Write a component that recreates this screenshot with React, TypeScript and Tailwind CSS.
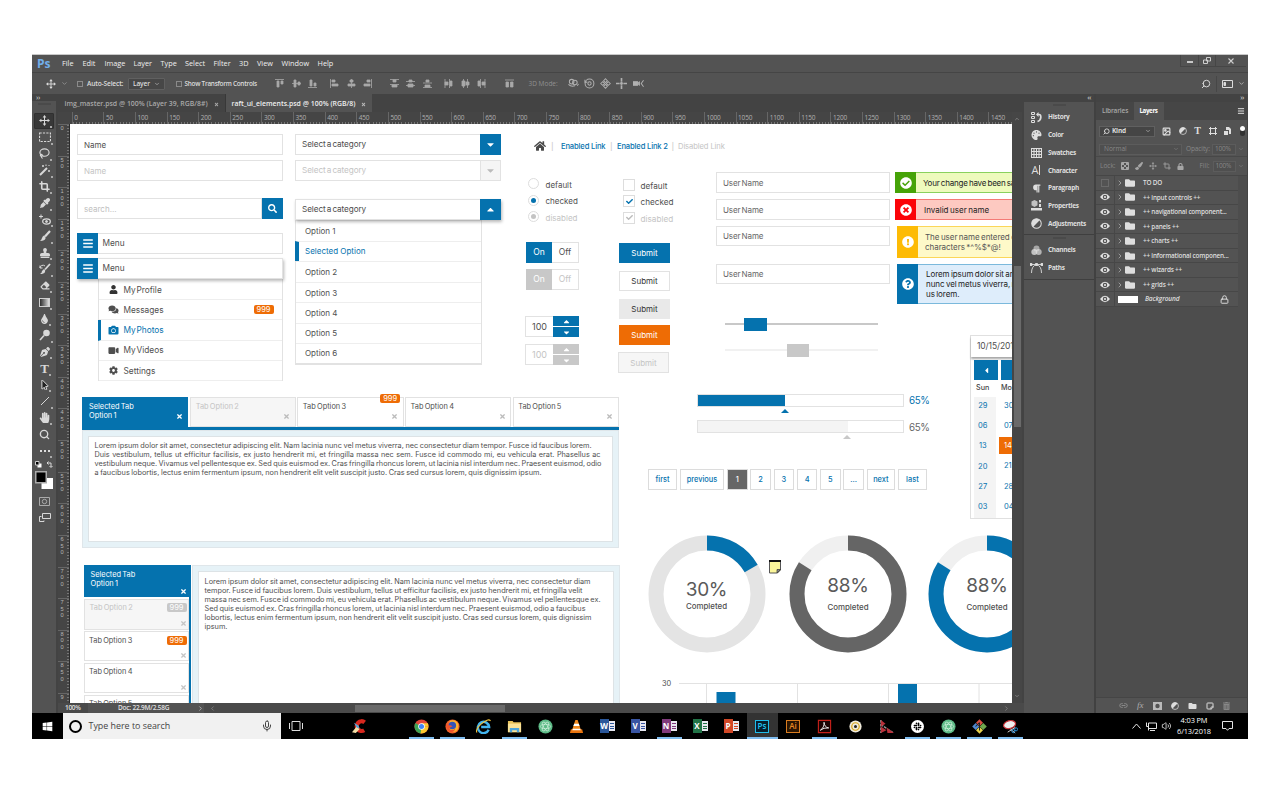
import React from "react";
import {
  FaHome, FaUser, FaComments, FaCamera, FaVideo, FaCog, FaSearch, FaBars, FaTimes, FaCheck,
  FaCheckCircle, FaTimesCircle, FaExclamationCircle, FaQuestionCircle, FaCaretUp, FaCaretDown, FaCaretLeft,
  FaHandPaper, FaEyeDropper, FaPaintBrush, FaEraser, FaTint, FaPenNib, FaStamp, FaFolder, FaWindows,
  FaLock, FaParagraph, FaPalette, FaTrashAlt, FaMousePointer, FaSlack,
} from "react-icons/fa";
import {
  ChevronDown, ChevronUp, ChevronRight, ChevronLeft, Search, Lasso, Crop,
  Image as ImageIcon, Mic, Volume2, Lock, StickyNote, Link2, Menu,
} from "lucide-react";

const UI = "font-['Open_Sans','Noto_Sans',sans-serif]";
const DOC = "font-['Inter','Liberation_Sans',sans-serif]";

/* ---------- small drawings ---------- */

function MoveIcon({ className }: { className: string }) {
  return (
    <svg className={className} viewBox="0 0 12 12" fill="currentColor" stroke="currentColor">
      <path d="M6 2v8M2 6h8" strokeWidth="1.100" />
      <path d="M6 0l2 2.600H4zM6 12l2-2.600H4zM0 6l2.600-2v4zM12 6L9.400 4v4z" stroke="none" />
    </svg>
  );
}

function HalfDisc({ className }: { className: string }) {
  return (
    <svg className={className} viewBox="0 0 12 12">
      <circle cx="6" cy="6" r="5.200" fill="none" stroke="currentColor" strokeWidth="1.100" />
      <path d="M9.700 2.300A5.200 5.200 0 0 0 2.300 9.700z" fill="currentColor" />
    </svg>
  );
}

function EyeIcon() {
  return (
    <svg className="h-[8px] w-[10px]" viewBox="0 0 12 9">
      <path d="M0 4.500Q6-3.500 12 4.500 6 12.500 0 4.500z" fill="#e4e4e4" /><circle cx="6" cy="4.500" r="2.700" fill="#535353" /><circle cx="6" cy="4.500" r="1.300" fill="#e4e4e4" />
    </svg>
  );
}

/* ---------- application chrome ---------- */

const menus: [string, string][] = [
  ["File", "w-[20.5px]"], ["Edit", "w-[22px]"], ["Image", "w-[29px]"], ["Layer", "w-[27px]"], ["Type", "w-[24.5px]"],
  ["Select", "w-[28.5px]"], ["Filter", "w-[25.5px]"], ["3D", "w-[18px]"], ["View", "w-[24.5px]"], ["Window", "w-[36px]"], ["Help", "w-[20px]"],
];

function MenuBar() {
  return (
    <div className="flex h-[18px] items-center border-b border-[#454545] bg-[#535353] text-[7.3px] text-[#f0f0f0]">
      <div className="w-[30px] pl-[5px] text-[12px] font-bold leading-none text-[#71aeea]">Ps</div>
      {menus.map(([m, w]) => <div key={m} className={`${w} whitespace-nowrap`}>{m}</div>)}
      <div className="mr-[2px] ml-auto flex h-[12px] items-center self-start border-b border-l border-[#464646] text-[#cfcfcf]">
        <div className="flex h-full w-[18px] items-end justify-center border-r border-[#464646] pb-[3px]"><div className="h-[2px] w-[6px] bg-[#c8c8c8]" /></div>
        <div className="flex h-full w-[17px] items-center justify-center border-r border-[#464646]">
          <svg className="h-[7px] w-[8px]" viewBox="0 0 8 7" fill="none" stroke="currentColor"><path d="M3.500.5h4v3.500h-4zM.5 3h4v3.500h-4z" /></svg>
        </div>
        <div className="flex h-full w-[30px] items-center justify-center">
          <svg className="h-[6px] w-[6px]" viewBox="0 0 6 6" stroke="currentColor" strokeWidth="1.100"><path d="M.5.5l5 5M5.500.5l-5 5" /></svg>
        </div>
      </div>
    </div>
  );
}

const alignPaths: [string, string][] = [
  ["M0 .5h9M2 2h2v6h-2zM6 2h2v3h-2z", "w-[16.5px]"],
  ["M0 4.500h9M2 1h2v7h-2zM6 3h2v3h-2z", "w-[16.5px]"],
  ["M0 8.500h9M2 1h2v6h-2zM6 4h2v3h-2z", "w-[22px]"],
  ["M.5 0v9M2 1h3v2h-3zM2 5h6v2h-6z", "w-[16.5px]"],
  ["M4.500 0v9M3 1h3v2h-3zM1 5h7v2h-7z", "w-[16.5px]"],
  ["M8.500 0v9M4 1h3v2h-3zM1 5h6v2h-6z", "w-[26.5px]"],
  ["M0 .5h9M0 5.500h9M3 1h3v2h-3zM2 6h5v2h-5z", "w-[16.5px]"],
  ["M0 2.500h9M0 6.500h9M3 1h3v2h-3zM2 5h5v3h-5z", "w-[16.5px]"],
  ["M0 4h9M0 8.500h9M3 1h3v2h-3zM2 6h5v2h-5z", "w-[21.5px]"],
  ["M1 0v9M5.500 0v9M1 3h3v3h-3zM6 2h2v5h-2z", "w-[16.5px]"],
  ["M2.500 0v9M6.500 0v9M1 2h3v5h-3zM5 3h3v3h-3z", "w-[16.5px]"],
  ["M3.500 0v9M8 0v9M1 2h2v5h-2zM5 3h3v3h-3z", "w-[27.5px]"],
  ["M0 1h9M1 3h2.500v5h-2.500zM5.500 3h2.500v5h-2.500z", "w-[26px]"],
];

const modeIcons = [
  <><circle cx="4" cy="4" r="2.500" /><circle cx="7.500" cy="5" r="2.500" /><path d="M.5 7q3 3 7 1.500M10 8.500l1.500-2" /></>,
  <><circle cx="6" cy="6" r="4.800" /><circle cx="6" cy="6" r="1.800" /><path d="M1 2v2.500h2.500" /></>,
  <><path d="M6 .8L8 3 6 5 4 3zM6 7l2 2-2 2.200L4 9zM.8 6L3 4l2 2-2 2zM11.200 6L9 4 7 6l2 2z" /></>,
  <><path d="M6 0v4M6 8v4M0 6h4M8 6h4" strokeWidth="1.800" /><circle cx="6" cy="6" r="1" fill="currentColor" /></>,
  <><path d="M0 4h5v4H0z" fill="currentColor" /><path d="M5 6l2-1.500v3zM11.500 2.500L9 6l2.500 3.500" fill="none" /></>,
];

function OptionsBar() {
  return (
    <div className="flex h-[21px] items-center bg-[#535353] text-[6.600px] font-semibold text-[#dcdcdc]">
      <div className="flex w-[43px] shrink-0 items-center pl-[14px]"><MoveIcon className="mr-[5px] h-[10px] w-[10px]" /><ChevronDown className="h-[7px] w-[7px] text-[#b0b0b0]" /></div>
      <div className="mr-[4px] ml-[2px] h-[6px] w-[6px] shrink-0 border border-[#8a8a8a]" />
      <div className="w-[41px] whitespace-nowrap tracking-[-0.150px]">Auto-Select:</div>
      <div className="flex h-[12px] w-[37px] items-center justify-between rounded-[1px] border border-[#606060] bg-[#474747] px-[4px] tracking-[-0.150px]">Layer<ChevronDown className="h-[6px] w-[6px]" /></div>
      <div className="mr-[3px] ml-[10.500px] h-[6px] w-[6px] shrink-0 border border-[#8a8a8a]" />
      <div className="w-[90.500px] text-[6.400px] whitespace-nowrap tracking-[-0.260px]">Show Transform Controls</div>
      <div className="flex shrink-0 items-center text-[#a8a8a8]">
        {alignPaths.map(([d, w], i) => (
          <div key={i} className={`${w} flex items-center`}>
            <svg className="h-[9px] w-[9px]" viewBox="0 0 9 9" fill="currentColor" stroke="currentColor" strokeWidth=".8"><path d={d} /></svg>
          </div>
        ))}
      </div>
      <div className="-ml-[2px] w-[39px] shrink-0 text-[6.500px] whitespace-nowrap font-normal text-[#909090]">3D Mode:</div>
      <div className="flex shrink-0 items-center gap-[5.300px] text-[#b0b0b0]">
        {modeIcons.map((m, i) => <svg key={i} className="h-[11px] w-[11px]" viewBox="0 0 12 12" fill="none" stroke="currentColor" strokeWidth="1.100">{m}</svg>)}
      </div>
      <div className="ml-auto flex items-center pr-[3px]">
        <Search className="h-[10px] w-[10px] -scale-x-100" strokeWidth={2.300} />
        <div className="mr-[5px] ml-[5px] h-[16px] w-px bg-[#474747]" />
        <svg className="mr-[5px] h-[8px] w-[11px]" viewBox="0 0 11 8" fill="none" stroke="currentColor"><path d="M.5.5h10v7h-10z" /><path d="M2 2.500h1.500v3h-1.500z" fill="currentColor" /></svg>
        <ChevronDown className="h-[7px] w-[7px]" />
      </div>
    </div>
  );
}

const svgTool = (children: React.ReactNode) => <svg className="h-[12px] w-[12px]" viewBox="0 0 12 12" fill="none" stroke="currentColor" strokeWidth="1">{children}</svg>;

const tools: React.ReactNode[] = [
  <MoveIcon className="h-[11px] w-[11px]" />,
  svgTool(<path d="M.5 2h11v8.500H.5z" strokeDasharray="2.200 1.200" strokeWidth="1.200" />),
  <Lasso className="h-[11px] w-[11px]" strokeWidth={2.500} />,
  svgTool(<><path d="M8 4L1 11" strokeWidth="2" /><path d="M4 1v2M3 2h2M10 6v2M9 7h2M10.500 1l-1 1M7 .5v1.500" /></>),
  <Crop className="h-[11px] w-[11px]" strokeWidth={3.500} />,
  <FaEyeDropper className="h-[10px] w-[10px]" />,
  svgTool(<><path d="M0 2.500h4M2 .5v4" /><ellipse cx="7.500" cy="7.500" rx="3.800" ry="2.600" strokeWidth="1.300" /><circle cx="7.500" cy="7.500" r="1" fill="currentColor" /></>),
  svgTool(<><path d="M11 1L6 6.500" strokeWidth="2.200" /><path d="M5 5.500q2 1 1.500 3t-5.500 2.500q1.500-1 2-3t2-2.500z" fill="currentColor" stroke="none" /></>),
  <FaStamp className="h-[10px] w-[10px]" />,
  svgTool(<><path d="M11 1L6 6.500" strokeWidth="1.800" /><path d="M5 6q2 1 1 3t-5 2q2-1 2-3z" fill="currentColor" stroke="none" /><path d="M1 5a3 3 0 0 1 5-2M1 2.500V5h2.500" /></>),
  <FaEraser className="h-[9px] w-[10px]" />,
  <div className="h-[9px] w-[11px] border border-[#cfcfcf] bg-gradient-to-r from-[#2f2f2f] to-[#e0e0e0]" />,
  <FaTint className="h-[10px] w-[9px]" />,
  svgTool(<><circle cx="7.500" cy="4" r="3.300" fill="currentColor" stroke="none" /><path d="M5 6.500L1 11" strokeWidth="1.600" /></>),
  <FaPenNib className="h-[10px] w-[10px]" />,
  <span className="font-['Liberation_Serif',serif] text-[13px] font-bold leading-none">T</span>,
  <FaMousePointer className="h-[10px] w-[8px] text-[#222] [stroke:#e0e0e0] [stroke-width:50px]" />,
  svgTool(<path d="M2 10L10 2" />),
  <FaHandPaper className="h-[11px] w-[11px]" />,
  <Search className="h-[11px] w-[11px]" strokeWidth={3} />,
  <div className="flex gap-[2px]"><i className="h-[2px] w-[2px] bg-[#ddd]" /><i className="h-[2px] w-[2px] bg-[#ddd]" /><i className="h-[2px] w-[2px] bg-[#ddd]" /></div>,
];

function Toolbar() {
  return (
    <div className="flex w-[26px] shrink-0 flex-col border-r-2 border-[#434343] bg-[#535353] text-[#d8d8d8]">
      <div className="h-[7px] bg-[#434343] pl-[4px] text-[8px] leading-[6px] tracking-[-0.500px]">››</div>
      <div className="mx-auto mt-[2px] mb-[7.500px] h-[2px] w-[13px] bg-[#4a4a4a]" />
      {tools.map((t, i) => (
        <div key={i} className={`mx-[2px] flex h-[16.500px] shrink-0 items-center justify-center border ${i === 0 ? "rounded-[1px] border-[#303030] bg-[#383838]" : "border-transparent"}`}>
          {t}
          {i !== 19 && <i className="-mr-[3px] h-[2px] w-[2px] self-end bg-[#aaa]" />}
        </div>
      ))}
      <div className="mt-[2px] flex justify-between px-[3px]">
        <svg className="h-[7px] w-[7px]" viewBox="0 0 7 7"><path d="M2.500 2.500h4v4h-4z" fill="#fff" /><path d="M.5.5h3.500v3.500h-3.500z" fill="#000" stroke="#ccc" /></svg>
        <svg className="h-[7px] w-[7px]" viewBox="0 0 7 7" fill="none" stroke="currentColor"><path d="M2.500.5L1 2l1.500 1.500M1 2h4v4M3.500 5L5 6.500 6.500 5" /></svg>
      </div>
      <svg className="mt-[3px] ml-[3px] h-[20px] w-[19px]" viewBox="0 0 19 20"><path d="M6.500 7h11.500v11h-11.500z" fill="#fff" /><path d="M.75.75h10.500v11h-10.500z" fill="#000" stroke="#aaa" strokeWidth="1.500" /></svg>
      <svg className="mt-[6px] ml-[7px] h-[9px] w-[11px]" viewBox="0 0 11 9" fill="none" stroke="#aaa"><path d="M.5.5h10v8h-10z" /><circle cx="5.500" cy="4.500" r="2.200" /></svg>
      <svg className="mt-[7px] ml-[7px] h-[10px] w-[12px]" viewBox="0 0 12 10" fill="none" stroke="currentColor"><path d="M3.500.5h8v5h-8zM5 7.500v1h-4.500v-5h2" /></svg>
    </div>
  );
}

function HRuler() {
  return (
    <div className="flex h-[12px] shrink-0 overflow-hidden bg-[#454545] text-[6.500px] leading-[12px] text-[#b0b0b0]">
      <div className="w-[13.800px] shrink-0" />
      {Array.from({ length: 30 }, (_, i) => (
        <div key={i} className="h-full w-[31.620px] shrink-0 border-l border-[#666] bg-[repeating-linear-gradient(90deg,#777_0_1px,transparent_1px_3.16px)] bg-[length:100%_2px] bg-bottom bg-no-repeat pl-[1.500px] tracking-[-0.200px]">{i * 50}</div>
      ))}
    </div>
  );
}

function VRuler() {
  return (
    <div className="flex w-[12px] shrink-0 flex-col overflow-hidden border-r border-[#2c2c2c] bg-[#454545] font-['Liberation_Sans',sans-serif] text-[5.700px] leading-[6.600px] text-[#b5b5b5]">
      {Array.from({ length: 19 }, (_, i) => (
        <div key={i} className="flex h-[31.620px] w-full shrink-0 flex-col border-t border-[#666] bg-[repeating-linear-gradient(180deg,#777_0_1px,transparent_1px_3.16px)] bg-[length:2px_100%] bg-right bg-no-repeat pl-[2.500px]">
          {(i === 18 ? "9" : String(i * 50)).split("").map((c, k) => <span key={k}>{c}</span>)}
        </div>
      ))}
    </div>
  );
}

/* ---------- document content ---------- */

function Field({ text, className = "" }: { text: string; className?: string }) {
  return <div className={`flex shrink-0 items-center border border-[#e2e2e2] bg-white pl-[6px] text-[8px] ${className}`}>{text}</div>;
}

function Select({ up = false, disabled = false, className = "" }: { up?: boolean; disabled?: boolean; className?: string }) {
  return (
    <div className={`flex w-[206px] shrink-0 border border-[#e2e2e2] bg-white text-[8.200px] [word-spacing:-1px] ${disabled ? "text-[#c4c4c4]" : "text-[#4c4c4c]"} ${className}`}>
      <div className="flex flex-1 items-center pl-[6px] tracking-[-0.100px]">Select a category</div>
      <div className={`-my-px -mr-px flex w-[21px] items-center justify-center ${disabled ? "border border-[#e2e2e2] bg-[#f5f5f5] text-[#bbb]" : "bg-[#0572ae] text-white"}`}>
        {up ? <FaCaretUp className="h-[11px] w-[11px]" /> : <FaCaretDown className="h-[11px] w-[11px]" />}
      </div>
    </div>
  );
}

function MenuHead({ open = false, className = "" }: { open?: boolean; className?: string }) {
  return (
    <div className={`flex h-[21px] w-[206px] shrink-0 border border-[#e2e2e2] bg-white ${open ? "relative shadow-[1px_2px_3px_rgba(0,0,0,0.28)]" : ""} ${className}`}>
      <div className="-my-px -ml-px flex w-[21px] items-center justify-center bg-[#0572ae] text-white"><FaBars className="h-[11px] w-[10px]" /></div>
      <div className="flex items-center pl-[4.500px] text-[8.300px]">Menu</div>
    </div>
  );
}

const menuRows: [React.ReactNode, string][] = [
  [<FaUser className="h-[9px] w-[9px] text-[#333]" />, "My Profile"],
  [<FaComments className="h-[9px] w-[11px]" />, "Messages"],
  [<FaCamera className="h-[10px] w-[11px]" />, "My Photos"],
  [<FaVideo className="h-[9px] w-[11px]" />, "My Videos"],
  [<FaCog className="h-[9px] w-[9px]" />, "Settings"],
];

function ColumnA() {
  return (
    <div className="flex w-[213px] shrink-0 flex-col pt-[10px] pl-[7px]">
      <Field text="Name" className="h-[21px]" />
      <Field text="Name" className="mt-[5px] h-[21px] text-[#c4c4c4]" />
      <div className="mt-[17px] flex h-[21px] shrink-0">
        <Field text="search..." className="flex-1 text-[#c0c0c0]" />
        <div className="flex w-[21px] items-center justify-center bg-[#0572ae] text-white"><FaSearch className="h-[9px] w-[9px]" /></div>
      </div>
      <MenuHead className="mt-[14px]" />
      <MenuHead open className="mt-[4px]" />
      <div className="ml-[21px] flex flex-col border-r border-l border-[#e2e2e2] pt-[1px]">
        {menuRows.map(([icon, label], i) => (
          <div key={label} className={`flex h-[20.200px] items-center border-b border-[#eee] ${i === 2 ? "-ml-px border-l-[3px] border-l-[#0572ae] pl-[6px] text-[#0572ae]" : "pl-[8px]"}`}>
            <div className="flex w-[13px] justify-center">{icon}</div>
            <div className="pt-[1px] pl-[3.500px] text-[8.300px] [word-spacing:-1.500px]">{label}</div>
            {i === 1 && <div className="mr-[8.500px] ml-auto rounded-[2px] bg-[#ee6c05] px-[3px] text-[7.500px] leading-[9px] text-white">999</div>}
          </div>
        ))}
      </div>
    </div>
  );
}

const optionRows: [string, string][] = [
  ["Option 1", "h-[20.500px]"], ["Selected Option", "h-[20px]"], ["Option 2", "h-[21.300px]"], ["Option 3", "h-[20.500px]"],
  ["Option 4", "h-[20.300px]"], ["Option 5", "h-[20px]"], ["Option 6", "h-[20px]"],
];

function ColumnB() {
  return (
    <div className="ml-[12px] flex w-[206px] shrink-0 flex-col pt-[10px]">
      <Select className="h-[21px]" />
      <Select disabled className="mt-[5px] h-[21px]" />
      <Select up className="relative mt-[18px] h-[21px] shadow-[1px_2px_3px_rgba(0,0,0,0.28)]" />
      <div className="w-[187px] border-x border-b-2 border-[#e2e2e2] text-[8px]">
        {optionRows.map(([o, h], i) => (
          <div key={o} className={`${h} flex items-center border-t border-[#eee] ${i === 1 ? "-ml-px border-l-[4px] border-l-[#0572ae] pl-[6px] text-[#0572ae]" : "pl-[9px]"}`}>{o}</div>
        ))}
      </div>
    </div>
  );
}

function Radio({ label, state }: { label: string; state: number }) {
  return (
    <div className={`flex h-[16.500px] items-center ${state === 2 ? "text-[#c4c4c4]" : ""}`}>
      <div className="flex h-[11px] w-[11px] items-center justify-center rounded-full border border-[#ddd]">
        {state > 0 && <div className={`h-[5px] w-[5px] rounded-full ${state === 1 ? "bg-[#0572ae]" : "bg-[#c4c4c4]"}`} />}
      </div>
      <div className="pt-[2px] pl-[6.500px] text-[8px]">{label}</div>
    </div>
  );
}

function Check({ label, state }: { label: string; state: number }) {
  return (
    <div className={`flex h-[16.500px] items-center ${state === 2 ? "text-[#c4c4c4]" : ""}`}>
      <div className="flex h-[12px] w-[12px] items-center justify-center border border-[#ddd]">
        {state > 0 && <FaCheck className={`h-[7px] w-[7px] ${state === 1 ? "text-[#0572ae]" : "text-[#bbb]"}`} />}
      </div>
      <div className="pt-[2px] pl-[5.500px] text-[8.200px]">{label}</div>
    </div>
  );
}

function Toggle({ disabled = false, className = "" }: { disabled?: boolean; className?: string }) {
  return (
    <div className={`ml-[1px] flex h-[21px] w-[53px] text-[8.500px] ${className}`}>
      <div className={`flex w-[26px] items-center justify-center text-white ${disabled ? "bg-[#c8c8c8]" : "bg-[#0572ae]"}`}>On</div>
      <div className={`flex flex-1 items-center justify-center border border-l-0 border-[#e2e2e2] ${disabled ? "text-[#c4c4c4]" : ""}`}>Off</div>
    </div>
  );
}

function Spinner({ disabled = false, className = "" }: { disabled?: boolean; className?: string }) {
  const bg = disabled ? "bg-[#c8c8c8]" : "bg-[#0572ae]";
  return (
    <div className={`flex h-[21px] w-[54px] text-[9px] ${className}`}>
      <div className={`flex flex-1 items-center justify-center border border-r-0 border-[#e2e2e2] ${disabled ? "text-[#c4c4c4]" : ""}`}>100</div>
      <div className="flex w-[26px] flex-col gap-px text-white">
        <div className={`flex flex-1 items-center justify-center ${bg}`}><FaCaretUp className="h-[9px] w-[9px]" /></div>
        <div className={`flex flex-1 items-center justify-center ${bg}`}><FaCaretDown className="h-[9px] w-[9px]" /></div>
      </div>
    </div>
  );
}

const btn = "flex shrink-0 w-[51px] items-center justify-center text-[8px]";

function ColumnC() {
  return (
    <div className="ml-[24px] flex w-[191px] shrink-0 flex-col">
      <div className="flex h-[51.500px] shrink-0 items-start pt-[16px] pl-[9px] text-[7.600px] leading-[13px] font-medium whitespace-nowrap text-[#0572ae]">
        <FaHome className="h-[12px] w-[12px] shrink-0 text-[#4a4a4a]" />
        <span className="w-[15px] shrink-0 pl-[5px] text-[#ccc]">|</span>
        <span className="w-[49px] shrink-0 tracking-[-0.150px]">Enabled Link</span>
        <span className="w-[7px] shrink-0 text-[#ccc]">|</span>
        <span className="w-[54.500px] shrink-0 tracking-[-0.150px]">Enabled Link 2</span>
        <span className="w-[6.500px] shrink-0 text-[#ccc]">|</span>
        <span className="font-normal tracking-[-0.100px] text-[#c4c4c4]">Disabled Link</span>
      </div>
      <div className="flex">
        <div className="w-[93px]">
          <div className="pl-[3px]">
            <Radio label="default" state={0} /><Radio label="checked" state={1} /><Radio label="disabled" state={2} />
          </div>
          <Toggle className="mt-[17px]" />
          <Toggle disabled className="mt-[6px]" />
          <Spinner className="mt-[26px]" />
          <Spinner disabled className="mt-[7px]" />
        </div>
        <div className="flex flex-col pt-[1px]">
          <div className="pl-[5px]">
            <Check label="default" state={0} /><Check label="checked" state={1} /><Check label="disabled" state={2} />
          </div>
          <div className={`${btn} mt-[17px] ml-[1px] h-[20px] bg-[#0572ae] text-white`}>Submit</div>
          <div className={`${btn} mt-[8px] ml-[1px] h-[20px] border border-[#e2e2e2] text-[#333]`}>Submit</div>
          <div className={`${btn} mt-[8px] ml-[1px] h-[20px] bg-[#e9e9e9] text-[#333]`}>Submit</div>
          <div className={`${btn} mt-[6px] ml-[1px] h-[20px] bg-[#ee6c05] text-white`}>Submit</div>
          <div className={`${btn} mt-[7px] h-[21px] border border-[#e2e2e2] bg-[#f6f6f6] text-[#c4c4c4]`}>Submit</div>
        </div>
      </div>
    </div>
  );
}

function Alert({ icon, head, body, lines, className }: { icon: React.ReactNode; head: string; body: string; lines: string[]; className: string }) {
  return (
    <div className={`flex flex-1 overflow-hidden ${className}`}>
      <div className={`flex w-[21px] shrink-0 items-center justify-center text-white ${head}`}>{icon}</div>
      <div className={`flex flex-1 flex-col justify-center overflow-hidden border-y text-[8px] leading-[10px] whitespace-nowrap [word-spacing:-0.700px] ${body}`}>
        {lines.map((l) => <div key={l}>{l}</div>)}
      </div>
    </div>
  );
}

function Slider({ left, thumb, track, className }: { left: string; thumb: string; track: string; className: string }) {
  return (
    <div className={`ml-[9px] flex h-[13px] w-[153px] items-center ${className}`}>
      <div className={`${left} h-[2px] ${track}`} /><div className={`h-[13px] w-[22.500px] ${thumb}`} /><div className={`h-[2px] flex-1 ${track}`} />
    </div>
  );
}

const calendar: [string, string][] = [["29", "30"], ["06", "07"], ["13", "14"], ["20", "21"], ["27", "28"], ["03", "04"]];

function Calendar() {
  return (
    <div className="flex h-[184px] w-[80px] shrink-0 flex-col border border-[#e0e0e0] bg-white">
      <div className="flex h-[21px] shrink-0 items-center pl-[6px] text-[8.500px] tracking-[-0.100px] shadow-[0_2px_2px_rgba(0,0,0,0.35)]">10/15/2018</div>
      <div className="mt-[3px] ml-[3px] flex h-[20px] shrink-0 gap-[3px] text-white">
        <div className="flex w-[24px] items-center justify-center bg-[#0572ae]"><FaCaretLeft className="h-[9px] w-[9px]" /></div>
        <div className="w-[40px] bg-[#0572ae]" />
      </div>
      <div className="flex h-[17px] shrink-0 items-center pl-[5px] text-[7.200px] font-medium text-[#444]"><span className="w-[25px]">Sun</span><span>Mon</span></div>
      <div className="ml-[3px] flex text-[7.500px] text-[#0572ae]">
        <div className="w-[21.500px] bg-[#f4f4f4]">{calendar.map(([a]) => <div key={a} className="flex h-[20.200px] items-center justify-center pr-[4px] pb-[3px]">{a}</div>)}</div>
        <div className="ml-[3.500px] w-[22px]">
          {calendar.map(([, b]) => (
            <div key={b} className="h-[20.200px]"><div className={`flex h-[17px] items-center pl-[5px] ${b === "14" ? "bg-[#ee6c05] text-white" : ""}`}>{b}</div></div>
          ))}
        </div>
      </div>
    </div>
  );
}

function ColumnD() {
  const input = "w-[174px] text-[7.900px] text-[#666] tracking-[-0.100px] [word-spacing:-1px]";
  const ic = "h-[12px] w-[12px]";
  return (
    <div className="flex w-[296px] shrink-0 flex-col pt-[48px]">
      <div className="flex h-[21px] items-start"><Field text="User Name" className={`${input} h-[21px]`} />
        <Alert className="ml-[5px] h-[21px]" head="bg-[#46a308]" body="pl-[7px] bg-[#eefabd] border-[#8ad15e] text-[#222] tracking-[-0.220px]" icon={<FaCheckCircle className={ic} />} lines={["Your change have been saved"]} /></div>
      <div className="mt-[6px] flex h-[21px] items-start"><Field text="User Name" className={`${input} h-[21px]`} />
        <Alert className="ml-[5px] h-[21px]" head="bg-[#fb0408]" body="pl-[8px] bg-[#fdc9c1] border-[#f47a76] text-[#222]" icon={<FaTimesCircle className={ic} />} lines={["Invalid user name"]} /></div>
      <div className="mt-[6px] flex h-[32px] items-start"><Field text="User Name" className={`${input} h-[20px]`} />
        <Alert className="ml-[7px] h-[32px]" head="bg-[#fdbb05]" body="pl-[7px] bg-[#fef9c9] border-[#fbd659] text-[#555] tracking-[-0.050px]" icon={<FaExclamationCircle className={ic} />} lines={["The user name entered contains", "characters *^%$*@!"]} /></div>
      <div className="mt-[6px] flex h-[40px] items-start"><Field text="User Name" className={`${input} h-[20px]`} />
        <Alert className="ml-[7px] h-[40px]" head="bg-[#0572ae]" body="pl-[8px] bg-[#deedfb] border-[#7bb9dc] text-[#222] tracking-[-0.080px]" icon={<FaQuestionCircle className={ic} />} lines={["Lorem ipsum dolor sit amet", "nunc vel metus viverra, nec", "us lorem."]} /></div>
      <div className="flex">
        <div className="w-[254px] shrink-0">
          <Slider className="mt-[13.500px]" left="w-[19px]" thumb="bg-[#0572ae]" track="bg-[#c8c8c8]" />
          <Slider className="mt-[13px]" left="w-[61.500px]" thumb="bg-[#c8c8c8]" track="bg-[#f1f1f1]" />
        </div>
        <div className="pt-[31px]"><Calendar /></div>
      </div>
    </div>
  );
}

const paneText: [string, string][] = [
  ["Lorem ipsum dolor sit amet, consectetur adipiscing elit. Nam lacinia nunc vel metus viverra, nec consectetur diam tempor. Fusce id faucibus lorem.", "w-[497px]"],
  ["Duis vestibulum, tellus ut efficitur facilisis, ex justo hendrerit mi, et fringilla massa nec sem. Fusce id commodo mi, eu vehicula erat. Phasellus ac", "w-[506px]"],
  ["vestibulum neque. Vivamus vel pellentesque ex. Sed quis euismod ex. Cras fringilla rhoncus lorem, ut lacinia nisl interdum nec. Praesent euismod, odio", "w-[507px]"],
  ["a faucibus lobortis, lectus enim fermentum ipsum, non hendrerit elit velit suscipit justo. Cras sed cursus lorem, quis dignissim ipsum.", "w-[447px]"],
];
const sideText: [string, string][] = [
  ["Lorem ipsum dolor sit amet, consectetur adipiscing elit. Nam lacinia nunc vel metus viverra, nec consectetur diam", "w-[386px]"],
  ["tempor. Fusce id faucibus lorem. Duis vestibulum, tellus ut efficitur facilisis, ex justo hendrerit mi, et fringilla velit", "w-[378px]"],
  ["massa nec sem. Fusce id commodo mi, eu vehicula erat. Phasellus ac vestibulum neque. Vivamus vel pellentesque ex.", "w-[396px]"],
  ["Sed quis euismod ex. Cras fringilla rhoncus lorem, ut lacinia nisl interdum nec. Praesent euismod, odio a faucibus", "w-[381px]"],
  ["lobortis, lectus enim fermentum ipsum, non hendrerit elit velit suscipit justo. Cras sed cursus lorem, quis dignissim", "w-[387px]"],
  ["ipsum.", "w-[23px]"],
];

function Lines({ rows }: { rows: [string, string][] }) {
  return <>{rows.map(([t, w]) => <div key={t} className={`${w} whitespace-nowrap [text-align-last:justify]`}>{t}</div>)}</>;
}

function TopTab({ label, state = 0, badge = false }: { label: string[]; state?: number; badge?: boolean }) {
  const look = state === 1 ? "bg-[#0572ae] border-[#0572ae] text-white pl-[6px]" : state === 2 ? "bg-[#f6f6f6] border-[#e2e2e2] text-[#c4c4c4] pl-[5px]" : "border-[#e2e2e2] pl-[4.500px]";
  return (
    <div className={`relative flex h-[30px] w-[106.300px] justify-between border pt-[3.500px] text-[7.400px] leading-[9px] [word-spacing:-0.800px] ${look}`}>
      <div>{label.map((l) => <div key={l}>{l}</div>)}</div>
      <FaTimes className={`mt-[11px] mr-[4.500px] h-[7px] w-[7px] ${state === 1 ? "" : "text-[#bbb]"}`} />
      {badge && <div className="absolute -top-[4px] right-[2.500px] rounded-[2px] bg-[#ee6c05] px-[3px] text-[7.500px] leading-[9px] text-white">999</div>}
    </div>
  );
}

function SideTab({ label, state = 0, badge = "", className }: { label: string[]; state?: number; badge?: string; className: string }) {
  const look = state === 1 ? "bg-[#0572ae] border-[#0572ae] text-white pl-[6px]" : state === 2 ? "bg-[#f6f6f6] border-[#e2e2e2] text-[#c4c4c4] pl-[5px]" : "border-[#e2e2e2] bg-white pl-[4.500px]";
  return (
    <div className={`flex shrink-0 justify-between border pt-[3.500px] pb-[1.500px] text-[7.400px] leading-[9px] [word-spacing:-0.800px] ${look} ${className}`}>
      <div>{label.map((l) => <div key={l}>{l}</div>)}</div>
      <div className="mr-[1.500px] flex flex-col items-end justify-between">
        <div>{badge && <div className={`rounded-[2px] px-[3px] text-[7.500px] text-white ${badge}`}>999</div>}</div>
        <FaTimes className={`h-[7px] w-[7px] ${state === 1 ? "" : "text-[#c4c4c4]"}`} />
      </div>
    </div>
  );
}

function TabsArea() {
  return (
    <div className="w-[570px] shrink-0 pt-[7px] pl-[12px]">
      <div className="flex w-[537px] justify-between">
        <TopTab label={["Selected Tab", "Option 1"]} state={1} /><TopTab label={["Tab Option 2"]} state={2} /><TopTab label={["Tab Option 3"]} badge />
        <TopTab label={["Tab Option 4"]} /><TopTab label={["Tab Option 5"]} />
      </div>
      <div className="h-[3px] w-[537px] bg-[#0572ae]" />
      <div className="h-[118px] w-[537px] border border-[#dfe6ea] bg-[#e6f2f7] px-[5px] py-[5px]">
        <div className="h-full border border-[#dde3e6] bg-white pt-[4px] pl-[5.500px] text-[7.300px] leading-[9.100px] [word-spacing:-1px]"><Lines rows={paneText} /></div>
      </div>
      <div className="mt-[17px] ml-[1.500px] flex h-[138px] w-[536px]">
        <div className="flex w-[107.500px] flex-col gap-[1.500px] overflow-hidden border-r-[2.500px] border-[#0572ae]">
          <SideTab label={["Selected Tab", "Option 1"]} state={1} className="h-[32px]" />
          <SideTab label={["Tab Option 2"]} state={2} badge="bg-[#c8c8c8]" className="h-[31px]" />
          <SideTab label={["Tab Option 3"]} badge="bg-[#ee6c05]" className="h-[30px]" />
          <SideTab label={["Tab Option 4"]} className="h-[30.500px]" />
          <SideTab label={["Tab Option 5"]} className="h-[30px]" />
        </div>
        <div className="ml-[1px] flex-1 border border-b-0 border-[#dfe6ea] bg-[#e6f2f7] px-[5px] pt-[5px]">
          <div className="h-full border border-b-0 border-[#dde3e6] bg-white pt-[5px] pl-[5.500px] text-[7.300px] leading-[9.100px] [word-spacing:-1px]"><Lines rows={sideText} /></div>
        </div>
      </div>
    </div>
  );
}

function Progress({ fill, mark, on, className }: { fill: string; mark: string; on: boolean; className: string }) {
  return (
    <div className={`ml-[57px] shrink-0 ${className}`}>
      <div className="flex items-center">
        <div className="h-[13px] w-[207px] border border-[#e2e2e2]"><div className={`h-full ${fill} ${on ? "bg-[#0572ae]" : "bg-[#f4f4f4]"}`} /></div>
        <div className={`pt-[1px] pl-[5px] text-[9.800px] leading-[13px] tracking-[-0.400px] ${on ? "text-[#0572ae]" : "text-[#666]"}`}>65%</div>
      </div>
      <svg className={`mt-[1.500px] h-[4px] w-[8px] ${mark} ${on ? "text-[#0572ae]" : "text-[#c8c8c8]"}`} viewBox="0 0 8 4" fill="currentColor"><path d="M4 0l4 4h-8z" /></svg>
    </div>
  );
}

const pages: [string, string][] = [
  ["first", "w-[29px] text-[#0572ae]"], ["previous", "w-[44.500px] text-[#0572ae]"], ["1", "w-[20.500px] bg-[#666] text-white"], ["2", "w-[20.500px] text-[#0572ae]"],
  ["3", "w-[20.500px] text-[#0572ae]"], ["4", "w-[20.500px] text-[#0572ae]"], ["5", "w-[20.500px] text-[#0572ae]"], ["...", "w-[20.500px] text-[#0572ae]"],
  ["next", "w-[28.500px] text-[#0572ae]"], ["last", "w-[29px] text-[#0572ae]"],
];

function Donut({ pct, color, rest, arc, top, gap, className = "" }: { pct: string; color: string; rest: string; arc: number; top: string; gap: string; className?: string }) {
  return (
    <div className={`grid h-[118px] w-[118px] shrink-0 ${className}`}>
      <svg className="h-[118px] w-[118px] [grid-area:1/1]" viewBox="0 0 118 118" fill="none" strokeWidth="15">
        <circle cx="59" cy="59" r="51" stroke={rest} />
        <circle cx="59" cy="59" r="51" stroke={color} pathLength={360} strokeDasharray={`${arc} 360`} transform="rotate(-90 59 59)" />
      </svg>
      <div className={`flex flex-col items-center [grid-area:1/1] ${top}`}>
        <div className="text-[19px] leading-[20px] tracking-[-0.300px] text-[#5a5a5a]">{pct}</div>
        <div className={`text-[7.900px] leading-[10px] font-medium ${gap}`}>Completed</div>
      </div>
    </div>
  );
}

function Note() {
  return (
    <svg className="mt-[25px] ml-[3px] h-[14px] w-[12px] shrink-0" viewBox="0 0 12 14"><path d="M.5.5h11v9.500l-3 3h-8z" fill="#fbf69a" stroke="#555" /><path d="M0 0h12v2h-12z" fill="#111" /><path d="M8 13v-3.500h3.500z" fill="#888" stroke="#333" strokeWidth=".7" /></svg>
  );
}

function RightArea() {
  return (
    <div className="flex w-[372px] shrink-0 flex-col overflow-hidden pt-[3px]">
      <Progress on fill="w-[87px]" mark="ml-[83.500px]" className="h-[26.500px]" />
      <Progress on={false} fill="w-[150px]" mark="ml-[146px]" className="h-[49.500px]" />
      <div className="ml-[8px] flex h-[21px] w-[279px] shrink-0 justify-between text-[7.400px] font-medium">
        {pages.map(([p, c]) => <div key={p} className={`flex items-center justify-center border border-[#dcdcdc] ${c}`}>{p}</div>)}
      </div>
      <div className="mt-[44.500px] ml-[7.500px] flex h-[118px] shrink-0">
        <Donut pct="30%" color="#0572ae" rest="#e4e4e4" arc={60} top="pt-[45px]" gap="pt-[1px]" />
        <Note />
        <Donut pct="88%" color="#656565" rest="#f0f0f0" arc={303} top="pt-[41px]" gap="pt-[6px]" className="ml-[8.500px]" />
        <Donut pct="88%" color="#0572ae" rest="#f0f0f0" arc={303} top="pt-[41px]" gap="pt-[6px]" className="ml-[21px]" />
      </div>
      <div className="mt-[26px] ml-[22px] flex h-[26px] shrink-0 text-[7.400px] leading-[10px]">
        <div className="w-[17px] shrink-0">30</div>
        <svg className="h-[26px] w-[340px] shrink-0" viewBox="0 0 340 26"><path d="M0 4.500h340M27.500 4.500v21M118.500 4.500v21M209.500 4.500v21M300 4.500v21" stroke="#e2e2e2" fill="none" /><path d="M37.500 13h19v13h-19zM219 5h19v21h-19z" fill="#0572ae" /></svg>
      </div>
    </div>
  );
}

function Canvas() {
  return (
    <div className={`${DOC} flex h-[579px] w-[942px] shrink-0 flex-col overflow-hidden bg-white text-[#4f4f4f]`}>
      <div className="flex h-[266px] shrink-0"><ColumnA /><ColumnB /><ColumnC /><ColumnD /></div>
      <div className="flex h-[313px] shrink-0"><TabsArea /><RightArea /></div>
    </div>
  );
}

function DocumentArea() {
  return (
    <div className="flex w-[966px] shrink-0 flex-col bg-[#434343]">
      <div className="flex h-[18px] shrink-0 text-[6.900px] font-semibold text-[#a8a8a8]">
        <div className="flex w-[167.500px] items-center border-r border-[#383838] pt-[2px] pl-[6.500px]"><span className="w-[149px] whitespace-nowrap">img_master.psd @ 100% (Layer 39, RGB/8#)</span><FaTimes className="h-[5px] w-[5px]" /></div>
        <div className="flex w-[146.500px] items-center bg-[#535353] pt-[2px] pl-[6px] text-[#eee]"><span className="w-[129px] whitespace-nowrap tracking-[0.020px]">raft_ui_elements.psd @ 100% (RGB/8)</span><FaTimes className="h-[5px] w-[5px] text-[#bbb]" /></div>
      </div>
      <div className="flex h-[591px] shrink-0">
        <div className="flex w-[954px] shrink-0 flex-col">
          <HRuler />
          <div className="flex h-[579px]"><VRuler /><Canvas /></div>
        </div>
        <div className="flex w-[10px] flex-col items-center bg-[#464646] text-[#aaa]">
          <ChevronUp className="mt-[4px] h-[6px] w-[6px]" />
          <div className="mt-[144px] h-[161px] w-[7px] bg-[#6a6a6a]" />
          <ChevronDown className="mt-auto mb-[4px] h-[6px] w-[6px]" />
        </div>
      </div>
      <div className="flex h-[10px] shrink-0 items-center bg-[#4a4a4a] text-[6.500px] font-semibold text-[#e0e0e0]">
        <div className="w-[30px] pl-[7px] tracking-[-0.300px]">100%</div>
        <div className="flex h-full w-[116px] items-center bg-[#535353] pl-[30px] whitespace-nowrap tracking-[-0.200px]">Doc: 22.9M/2.58G<ChevronRight className="ml-auto h-[7px] w-[7px]" /></div>
        <ChevronLeft className="ml-[5px] h-[7px] w-[7px] text-[#999]" />
        <div className="ml-[139px] h-[7px] w-[150px] bg-[#6a6a6a]" />
        <ChevronRight className="mr-[14px] ml-auto h-[7px] w-[7px] text-[#999]" />
      </div>
    </div>
  );
}

/* ---------- panels ---------- */

const panelsTop: [React.ReactNode, string][] = [
  [<svg className="h-[11px] w-[11px]" viewBox="0 0 11 11" fill="none" stroke="currentColor"><path d="M.5.5h3v2h-3zM.5 4.500h3v2h-3zM.5 8.500h3v2h-3z" /><path d="M6.500 2.500h1.500q2 0 1.800 3t-3.300 4" strokeWidth="1.700" /><path d="M7.500 0v5L5 2.500z" fill="currentColor" stroke="none" /></svg>, "History"],
  [<FaPalette className="h-[10px] w-[11px]" />, "Color"],
  [<svg className="h-[10px] w-[11px]" viewBox="0 0 11 10" fill="none" stroke="currentColor" strokeWidth="1.100"><path d="M.5.500h10v9H.5zM.5 3.500h10M.5 6.500h10M3 .5v9M5.500.5v9M8 .5v9" /></svg>, "Swatches"],
  [<span className="border-r border-[#ddd] pr-[1px] text-[11px] font-normal leading-[10px]">A</span>, "Character"],
  [<FaParagraph className="h-[9px] w-[9px]" />, "Paragraph"],
  [<svg className="h-[11px] w-[11px]" viewBox="0 0 11 11" fill="currentColor"><path d="M3.500 0l3 1.600v3.600L3.500 7l-3-1.800V1.600z" opacity=".8" /><path d="M8 0h2v2.500h-2zM8 4h2v3h-2zM0 8h11v2.500h-11z" /></svg>, "Properties"],
  [<HalfDisc className="h-[11px] w-[11px]" />, "Adjustments"],
];
const panelsBottom: [React.ReactNode, string][] = [
  [<svg className="h-[11px] w-[11px]" viewBox="0 0 11 11" fill="currentColor"><circle cx="5.500" cy="3.500" r="3" opacity=".6" /><circle cx="3.300" cy="7" r="3" opacity=".8" /><circle cx="7.700" cy="7" r="3" opacity=".7" /></svg>, "Channels"],
  [<svg className="h-[10px] w-[13px]" viewBox="0 0 13 10" fill="none" stroke="currentColor" strokeWidth=".9"><path d="M1.500 10q0-7 5-8.500q5 1.500 5 8.500M1 1.500h11" /><path d="M0 .5h2v2h-2zM11 .5h2v2h-2zM5.500.5h2v2h-2z" fill="currentColor" /></svg>, "Paths"],
];

function IconPanelRow({ row }: { row: [React.ReactNode, string] }) {
  return <div className="flex h-[17.700px] items-center"><div className="flex w-[24px] justify-center">{row[0]}</div><div className="text-[6.500px] font-bold tracking-[-0.330px]">{row[1]}</div></div>;
}

function IconPanel() {
  return (
    <div className="flex w-[72px] shrink-0 flex-col border-r-[2px] border-[#414141] bg-[#535353] text-[#dedede]">
      <div className="h-[8px] shrink-0 bg-[#434343] pr-[3px] text-right text-[8px] leading-[6px] tracking-[-0.500px]">‹‹</div>
      <div className="mx-auto mt-[2px] mb-[2.500px] h-[2px] w-[13px] bg-[#4a4a4a]" />
      {panelsTop.map((r) => <IconPanelRow key={r[1]} row={r} />)}
      <div className="mt-[2px] h-px bg-[#3f3f3f]" />
      <div className="mx-auto mt-[2px] mb-[2px] h-[2px] w-[13px] bg-[#4a4a4a]" />
      {panelsBottom.map((r) => <IconPanelRow key={r[1]} row={r} />)}
      <div className="mt-[2px] h-px bg-[#3f3f3f]" />
    </div>
  );
}

const layers = ["TO DO", "++ input controls ++", "++ navigational component...", "++ panels ++", "++ charts ++", "++ informational componen...", "++ wizards ++", "++ grids ++"];

function LayersPanel() {
  const faint = "text-[#888]";
  return (
    <div className="flex w-[152px] flex-col border-r border-[#444] bg-[#4d4d4d] text-[6.500px] text-[#dedede]">
      <div className="h-[8px] shrink-0 bg-[#434343] pr-[3px] text-right text-[8px] leading-[6px] tracking-[-0.500px]">››</div>
      <div className="flex h-[18px] shrink-0 items-center bg-[#464646] font-semibold">
        <div className="w-[37.500px] pl-[6px] tracking-[-0.150px] text-[#a8a8a8]">Libraries</div>
        <div className="flex h-full w-[30px] items-center justify-center bg-[#535353] text-[6.200px] font-bold tracking-[-0.350px] text-white">Layers</div>
        <Menu className="mr-[2px] ml-auto h-[8px] w-[8px]" strokeWidth={3} />
      </div>
      <div className="flex h-[22px] shrink-0 items-center bg-[#535353] pl-[3px]">
        <div className="flex h-[11px] w-[56px] shrink-0 items-center border border-[#606060] bg-[#454545] px-[3px]"><Search className="mr-[2px] h-[7px] w-[7px] -scale-x-100" strokeWidth={3} /><b className="tracking-[-0.200px]">Kind</b><ChevronDown className="ml-auto h-[6px] w-[6px]" /></div>
        <div className="flex flex-1 items-center justify-between pr-[2px] pl-[7px]">
          <ImageIcon className="h-[9px] w-[9px]" strokeWidth={3} /><HalfDisc className="h-[8px] w-[8px]" />
          <span className="font-['Liberation_Serif',serif] text-[10px] font-bold leading-none">T</span>
          <svg className="h-[8px] w-[8px]" viewBox="0 0 8 8" fill="none" stroke="currentColor"><path d="M0 1.500h8M0 6.500h8M1.500 0v8M6.500 0v8" /></svg>
          <svg className="h-[8px] w-[8px]" viewBox="0 0 8 8" fill="currentColor"><path d="M2 0h3l2 2v5h-2v-4h-3zM0 4h4v4h-4z" /></svg>
          <div className="h-[10px] w-[5px] rounded-full bg-[#333]"><div className="h-[5px] w-[5px] rounded-full bg-white" /></div>
        </div>
      </div>
      <div className={`flex h-[15px] shrink-0 items-center border-b border-[#484848] bg-[#535353] pl-[3px] ${faint}`}>
        <div className="flex h-[11px] w-[83px] shrink-0 items-center border border-[#5c5c5c] bg-[#4f4f4f] pr-[2px] pl-[4px]">Normal<ChevronDown className="ml-auto h-[6px] w-[6px]" /></div>
        <div className="w-[30px] shrink-0 pl-[4px] tracking-[-0.100px]">Opacity:</div>
        <div className="flex h-[11px] items-center border border-[#5c5c5c] bg-[#4f4f4f] pr-[4px] pl-[2px] tracking-[-0.200px]">100%</div><ChevronDown className="ml-[2px] h-[6px] w-[6px]" />
      </div>
      <div className={`flex h-[18px] shrink-0 items-center bg-[#535353] pl-[4px] ${faint}`}>
        <div className="w-[20.500px]">Lock:</div>
        <div className="flex w-[63px] items-center justify-between text-[#a5a5a5]">
          <svg className="h-[8px] w-[8px]" viewBox="0 0 8 8"><path d="M.5.5h7v7h-7z" fill="none" stroke="currentColor" /><path d="M1 1h2v2H1zM5 1h2v2H5zM3 3h2v2H3zM1 5h2v2H1zM5 5h2v2H5z" fill="currentColor" /></svg>
          <FaPaintBrush className="h-[8px] w-[8px]" /><MoveIcon className="h-[8px] w-[8px]" /><Crop className="h-[8px] w-[8px]" strokeWidth={2.500} /><FaLock className="h-[7px] w-[7px]" />
        </div>
        <div className="w-[29px] pl-[16px]">Fill:</div>
        <div className="flex h-[11px] items-center border border-[#5c5c5c] bg-[#4f4f4f] pr-[4px] pl-[2px] tracking-[-0.200px]">100%</div><ChevronDown className="ml-[2px] h-[6px] w-[6px]" />
      </div>
      <div className="h-px shrink-0 bg-[#464646]" />
      <div className="w-[142px] shrink-0 bg-[#535353]">
        {layers.map((l, i) => (
          <div key={l} className="flex h-[14.550px] items-center border-b border-[#474747]">
            <div className="flex h-full w-[19px] items-center justify-center border-r border-[#474747]">{i === 0 ? <i className="h-[8px] w-[8px] border border-[#6a6a6a]" /> : <EyeIcon />}</div>
            <ChevronRight className="ml-[1px] h-[8px] w-[8px] text-[#c0c0c0]" />
            <FaFolder className="ml-[1px] h-[10px] w-[10px]" />
            <span className="pl-[8px] whitespace-nowrap font-semibold tracking-[-0.200px] text-[6.400px]">{l}</span>
          </div>
        ))}
        <div className="flex h-[14.600px] items-center border-b border-[#474747]">
          <div className="flex h-full w-[19px] items-center justify-center border-r border-[#474747]"><EyeIcon /></div>
          <div className="ml-[3px] h-[7px] w-[20px] bg-white" />
          <span className="pl-[7px] text-[6.600px] font-semibold italic tracking-[-0.150px]">Background</span>
          <Lock className="mr-[9px] ml-auto h-[9px] w-[9px]" strokeWidth={2.500} />
        </div>
      </div>
      <div className="mt-auto flex h-[16px] shrink-0 items-center justify-between border-t border-[#454545] bg-[#535353] pr-[17px] pl-[23px]">
        <Link2 className="h-[9px] w-[9px] text-[#999]" /><i className="font-['Liberation_Serif',serif] text-[9px] text-[#b0b0b0]">fx</i>
        <svg className="h-[8px] w-[9px]" viewBox="0 0 9 8"><path d="M0 0h9v8h-9z" fill="#bbb" /><circle cx="4.500" cy="4" r="2.200" fill="#535353" /></svg>
        <HalfDisc className="h-[8px] w-[8px]" /><FaFolder className="h-[8px] w-[9px]" /><StickyNote className="h-[8px] w-[8px] rotate-90" strokeWidth={3} /><FaTrashAlt className="h-[8px] w-[7px] text-[#888]" />
      </div>
    </div>
  );
}

/* ---------- taskbar ---------- */

function Office({ letter, color }: { letter: string; color: string }) {
  return (
    <div className="flex h-[14px] items-center">
      <div className={`flex h-[14px] w-[9px] items-center justify-center text-[8px] font-bold text-white ${color}`}>{letter}</div>
      <div className="flex h-[10px] w-[6px] flex-col justify-evenly bg-[#e8e8f0] px-[1px]"><i className={`h-px ${color}`} /><i className={`h-px ${color}`} /><i className={`h-px ${color}`} /></div>
    </div>
  );
}

const app = (children: React.ReactNode) => <svg className="h-[15px] w-[15px]" viewBox="0 0 16 16">{children}</svg>;
const atom = app(<><circle cx="8" cy="8" r="7.500" fill="#5dbb87" /><g fill="none" stroke="#d4f1df" strokeWidth=".7"><ellipse cx="8" cy="8" rx="5.500" ry="2.200" /><ellipse cx="8" cy="8" rx="5.500" ry="2.200" transform="rotate(60 8 8)" /><ellipse cx="8" cy="8" rx="5.500" ry="2.200" transform="rotate(120 8 8)" /></g></>);

const apps: [React.ReactNode, boolean][] = [
  [app(<><circle cx="8" cy="8" r="7.500" fill="#e3453a" /><path d="M8 8L1.500 4.250A7.500 7.500 0 0 0 7 15.400L11.200 10z" fill="#3da556" /><path d="M8 8h7.500A7.500 7.500 0 0 1 7 15.400z" fill="#fbc92f" /><path d="M8 4.500h6.700q.8 1.500.8 3.500h-4z" fill="#fbc92f" /><circle cx="8" cy="8" r="3.500" fill="#fff" /><circle cx="8" cy="8" r="2.700" fill="#4285f4" /></>), true],
  [app(<><circle cx="8" cy="8" r="7.500" fill="#f3662c" /><path d="M5 2q6-2 9 3 1 5-2 8-6 2-8-3 1-4 1-8z" fill="#fbb52d" /><circle cx="7.800" cy="7" r="4" fill="#3453b8" /><path d="M1 5q2 0 3 2 2-1 4 1-4 1-3 3 3 2 6-1-1 4-5 4-5-2-5-9z" fill="#f0532c" /></>), true],
  [app(<><path d="M13.500 11.500A6 6 0 1 1 14 8.500H5.500" fill="none" stroke="#43b4ee" strokeWidth="2.600" /><path d="M1 14.500Q-1 11 6 5T15.500 2" fill="none" stroke="#f3c33c" strokeWidth="1.200" /></>), false],
  [app(<><path d="M1 2h5l1 1.500h8V14H1z" fill="#e9c35c" /><path d="M1 5h14v9H1z" fill="#fbe296" /><path d="M3 14V9.500h10V14h-2.500v-2h-5v2z" fill="#4da5dc" /></>), true],
  [atom, false],
  [app(<><path d="M6.800 1h2.400l3.600 11h-9.600z" fill="#f28a1e" /><path d="M5.500 5h5l.8 2.500h-6.600z" fill="#fff" /><path d="M2 11h12l1 4H1z" fill="#e9740e" /><path d="M4 10.500h8l.5 1.500h-9z" fill="#fff" /></>), false],
  [<Office letter="W" color="bg-[#2b579a]" />, false],
  [<Office letter="V" color="bg-[#3955a3]" />, false],
  [<Office letter="N" color="bg-[#80397b]" />, true],
  [<Office letter="X" color="bg-[#217346]" />, false],
  [<Office letter="P" color="bg-[#d24726]" />, false],
  [<div className="flex h-[13px] w-[14px] items-center justify-center border border-[#20bdeb] bg-[#061e2c] text-[8px] font-semibold text-[#20c4f4]">Ps</div>, true],
  [<div className="flex h-[13px] w-[14px] items-center justify-center border border-[#d97c1f] bg-[#2a1502] text-[8px] font-semibold text-[#ee8a25]">Ai</div>, false],
  [app(<><path d="M1.500 1.500h13v13h-13z" fill="#1a0202" stroke="#c5201a" strokeWidth="1.200" /><path d="M3.500 12Q8 9 7.500 3.500 8 9 12.500 9.500 7 9 3.500 12z" fill="none" stroke="#f1f1f1" /></>), true],
  [app(<><circle cx="8" cy="8" r="6.500" fill="#efeadb" /><circle cx="8" cy="8" r="4" fill="none" stroke="#d9a518" strokeWidth="1.300" /><circle cx="8" cy="8" r="1.600" fill="#222" /></>), false],
  [app(<><path d="M2 1v14M2 6l13 8.500" stroke="#999" strokeWidth="1.500" strokeDasharray="3 1" fill="none" /><path d="M2 1l5 4-5 3zM2 8l6 4-6 3zM8 9l8 6h-7z" fill="#b8303a" /></>), false],
  [<div className="flex h-[13px] w-[13px] items-center justify-center rounded-full bg-white text-black"><FaSlack className="h-[9px] w-[9px]" /></div>, true],
  [atom, true],
  [app(<g transform="rotate(45 8 8)"><path d="M2.500 2.500h5.300v5.300H2.500z" fill="#4f87cf" transform="translate(0 5.700)" /><path d="M2.500 2.500h5.300v5.300H2.500z" fill="#dd5044" /><path d="M8.200 2.500h5.300v5.300H8.200z" fill="#6fa84e" /><path d="M8.200 8.200h5.300v5.300H8.200z" fill="#e8d44e" /><path d="M5 5l6 6M5 11V5" stroke="#222" strokeWidth="1.100" fill="none" /></g>), true],
  [app(<><ellipse cx="7" cy="6" rx="6.500" ry="4.200" fill="#eee" stroke="#c62f35" strokeWidth="1.300" transform="rotate(-15 7 6)" /><path d="M5 14L13 9M8 11l5 4" stroke="#ddd" /><circle cx="11" cy="13" r="1.600" fill="none" stroke="#2b8fd8" /><circle cx="14" cy="11" r="1.600" fill="none" stroke="#2b8fd8" /></>), true],
];

function Taskbar() {
  return (
    <div className="flex h-[26px] shrink-0 items-center bg-black text-white">
      <div className="flex w-[31px] justify-center"><FaWindows className="h-[11px] w-[11px]" /></div>
      <div className="flex h-full w-[217.500px] items-center bg-[#f1f1f1] text-[#444]">
        <div className="ml-[6px] h-[13px] w-[13px] rounded-full border-2 border-black" />
        <div className="pl-[6.500px] text-[8.900px]">Type here to search</div>
        <Mic className="mr-[8px] ml-auto h-[12px] w-[12px]" />
      </div>
      <svg className="ml-[8px] h-[10px] w-[14px]" viewBox="0 0 14 10" fill="none" stroke="#ddd"><path d="M3 .5h8v9h-8zM.5 2v6M13.500 2v6" /></svg>
      <div className="ml-[49px] flex w-[54px]">
        {app(<><path d="M13.500 3.500A5.200 5.200 0 1 0 13 12" fill="none" stroke="#d8281f" strokeWidth="4.500" /><path d="M0 14l5-6 3 3-4 4z" fill="#f4e0a8" /><path d="M2 4l5 3 1 3-3-1z" fill="#5aa7d8" /></>)}
      </div>
      {apps.map(([icon, on], i) => (
        <div key={i} className={`flex h-full w-[31px] shrink-0 flex-col items-center ${i === 11 ? "bg-[#333]" : ""}`}>
          <div className="flex h-[24px] items-center pt-[2px]">{icon}</div>
          {on && <div className={`h-[2px] bg-[#7fbdf0] ${i === 11 ? "w-full" : "w-[25px]"}`} />}
        </div>
      ))}
      <div className="ml-auto flex items-center text-[#e4e4e4]">
        <svg className="h-[6px] w-[9px]" viewBox="0 0 9 6" fill="none" stroke="currentColor"><path d="M.5 5.500l4-4.500 4 4.500" /></svg>
        <svg className="ml-[5px] h-[9px] w-[11px]" viewBox="0 0 11 9" fill="none" stroke="currentColor"><path d="M2.500 1h8v5.500h-8zM.5.5v4h2v4M4 8.500h5" /></svg>
        <Volume2 className="ml-[4px] h-[10px] w-[11px]" />
        <div className="w-[44px] text-center text-[7.400px] leading-[11px] tracking-[-0.120px] text-white">4:03 PM<br />6/13/2018</div>
        <svg className="mr-[15px] ml-[6px] h-[10px] w-[11px]" viewBox="0 0 11 10" fill="none" stroke="currentColor"><path d="M.5.5h10v7h-3.500l-1.500 1.800-1.500-1.800h-3.500z" /></svg>
      </div>
    </div>
  );
}

export default function App() {
  return (
    <div className={`${UI} h-[800px] w-[1280px] overflow-hidden bg-white pt-[54px] pl-[32px]`}>
      <div className="flex h-[685px] w-[1216px] flex-col overflow-hidden border-t border-[#c9c9c9]">
        <MenuBar />
        <OptionsBar />
        <div className="flex h-[619px] shrink-0"><Toolbar /><DocumentArea /><IconPanel /><LayersPanel /></div>
        <Taskbar />
      </div>
    </div>
  );
}
